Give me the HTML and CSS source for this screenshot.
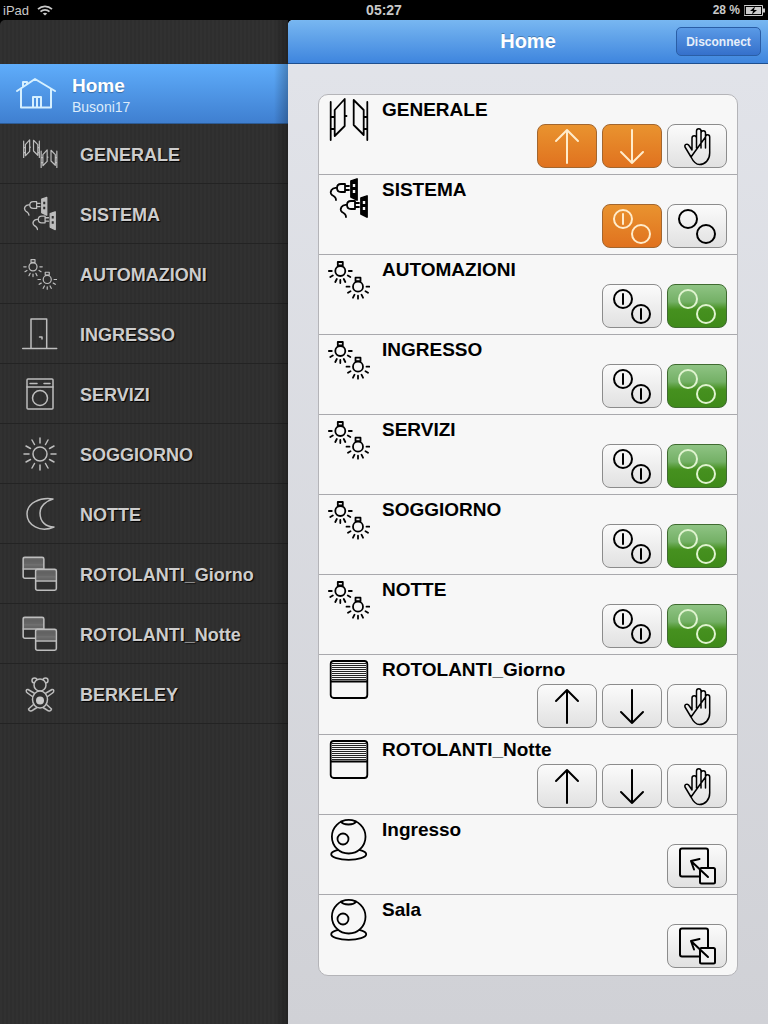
FILE: index.html
```html
<!DOCTYPE html>
<html lang="en">
<head>
    <meta charset="UTF-8">
    <meta name="viewport" content="width=device-width, initial-scale=1.0">
    <title>Home</title>
    <link rel="stylesheet" href="styles.css">
</head>
<body>
    <!-- shared icon shapes -->
    <svg class="defs" width="0" height="0">
        <defs>
            <symbol id="i-gates" viewBox="0 0 42 46">
                <path d="M2.7 7V45M6.7 15L16.7 4V31L6.7 41ZM2.7 22H6.7M2.7 34H6.7M16.7 21H18.5M25.7 5L35.7 15V40L25.7 30ZM39.3 7V45M35.7 22H39.3M35.7 34H39.3"/>
            </symbol>
            <g id="plug">
                <path class="solid" d="M23 6L29 4V25L23 22Z"/>
                <path class="holes" d="M24.800 9H27.200V12H24.800ZM24.800 15H27.200V18H24.800Z"/>
                <path d="M21 11H17M21 15H17M17 9H13C10 9 9 11 9 13C9 15 10 17 13 17H17ZM9 13C4 12 1 17 4 20C6 21 8 22 8 25"/>
            </g>
            <symbol id="i-plugs" viewBox="0 0 42 46">
                <use href="#plug"/>
                <use href="#plug" x="10" y="17"/>
            </symbol>
            <g id="bulb">
                <circle r="5"/>
                <path d="M-2.500 -9H2.500V-5.500H-2.500Z"/>
                <path d="M-11.500 0H-8.500M8.500 0H11.500M-10 6L-7.500 4.500M10 6L7.500 4.500M-5 11L-3.500 8M5 11L3.500 8M0 12V9"/>
            </g>
            <symbol id="i-lights" viewBox="0 0 42 46">
                <use href="#bulb" x="12.300" y="16"/>
                <use href="#bulb" x="30" y="31.700"/>
            </symbol>
            <symbol id="i-shutter" viewBox="0 0 42 46">
                <rect class="filled" x="2.700" y="6" width="36.600" height="37" rx="3"/>
                <path class="thin" d="M4 8.500H38M4 10.500H38M4 12.500H38M4 14.500H38M4 16.500H38M4 18.500H38M4 20.500H38M4 22.500H38M4 24.500H38"/>
                <path d="M3 26.500H39"/>
            </symbol>
            <symbol id="i-webcam" viewBox="0 0 42 46">
                <ellipse cx="20.700" cy="39.300" rx="17.500" ry="5.500"/>
                <circle class="filled" cx="20.700" cy="21.700" r="16.800"/>
                <circle cx="15" cy="24" r="5.500"/>
                <path d="M13 6.500C15 10.500 26 10.500 28 6.500"/>
            </symbol>
            <symbol id="b-up" viewBox="0 0 60 44"><path d="M30 6V39M19 17L30 6L41 17"/></symbol>
            <symbol id="b-down" viewBox="0 0 60 44"><path d="M30 6V39M19 28L30 39L41 28"/></symbol>
            <symbol id="b-hand" viewBox="0 0 60 44">
                <path d="M24 33L18 23C17 20.500 20.500 19 22 21.500L25 26V14C25 11 29.500 11 29.500 14V24M29.500 14V7C29.500 4 34 4 34 7V24M34 9C34 6 38.500 6 38.500 9V24M38.500 13C38.500 10 42.700 10 42.700 13V29C42.700 36 38 40.500 32.500 40.500C28.500 40.500 26 37 24 33Z"/>
            </symbol>
            <symbol id="b-on-off" viewBox="0 0 60 44">
                <circle cx="21" cy="15" r="9"/><path d="M21 10V20"/><circle cx="39" cy="30" r="9"/>
            </symbol>
            <symbol id="b-on-on" viewBox="0 0 60 44">
                <circle cx="21" cy="15" r="9"/><path d="M21 10V20M39 25V35"/><circle cx="39" cy="30" r="9"/>
            </symbol>
            <symbol id="b-off-off" viewBox="0 0 60 44">
                <circle cx="21" cy="15" r="9"/><circle cx="39" cy="30" r="9"/>
            </symbol>
            <symbol id="b-window" viewBox="0 0 60 44">
                <rect x="13" y="4.500" width="28" height="28" rx="2"/>
                <rect class="filled" x="33" y="24" width="15" height="15.500" rx="1.500"/>
                <path d="M41 33L24 17M24 17L32.500 15M24 17L27 25.500"/>
            </symbol>
        </defs>
    </svg>

    <div class="status-bar">
        <div class="status-left">
            <span>iPad</span>
            <svg class="wifi" viewBox="0 0 16 11"><path d="M1 4.200C5 .4 11 .4 15 4.200M3.500 6.600C6 4.300 10 4.300 12.500 6.600"/><path class="wifi-dot" d="M8 10.500L5.800 8.600C7 7.600 9 7.600 10.200 8.600Z"/></svg>
        </div>
        <div class="status-time">05:27</div>
        <div class="status-right">
            <span>28 %</span>
            <svg class="battery" viewBox="0 0 21 11"><rect x=".5" y=".5" width="18" height="10" fill="none" stroke="#ccc"/><rect x="2" y="2" width="15" height="7" fill="#ccc"/><rect x="19" y="3.500" width="2" height="4" fill="#ccc"/><path d="M11 1.500L6 6H9L8 9.500L13 5H10Z" fill="#000"/></svg>
        </div>
    </div>

    <div class="app">
        <aside class="sidebar">
            <div class="sidebar-top"></div>
            <a class="side-home">
                <svg class="side-icon home-icon" viewBox="0 0 40 40"><path d="M1 17L19 5L39 17M7 13V8H11V10M5 15V33.500H35V15M17 33.500V23H25V33.500M21 23V33.500"/></svg>
                <div class="home-text">
                    <div class="home-title">Home</div>
                    <div class="home-sub">Busoni17</div>
                </div>
            </a>
            <ul class="side-list">
                <li class="side-item">
                    <svg class="side-icon" viewBox="0 0 40 40"><use class="mini" href="#i-gates" x="2.500" y="4" width="18" height="20"/><use class="mini" href="#i-gates" x="20" y="14" width="18" height="20"/></svg>
                    <span>GENERALE</span>
                </li>
                <li class="side-item">
                    <svg class="side-icon" viewBox="0 0 40 40"><use href="#i-plugs" x="2" y="0" width="36" height="39"/></svg>
                    <span>SISTEMA</span>
                </li>
                <li class="side-item">
                    <svg class="side-icon" viewBox="0 0 40 40"><use href="#i-lights" x="3" y="0" width="34" height="37"/></svg>
                    <span>AUTOMAZIONI</span>
                </li>
                <li class="side-item">
                    <svg class="side-icon" viewBox="0 0 40 40"><path d="M11 33.500V5H26.700V33.500M2.700 34.500H36.700M19.500 23H22V25"/></svg>
                    <span>INGRESSO</span>
                </li>
                <li class="side-item">
                    <svg class="side-icon" viewBox="0 0 40 40"><rect x="7" y="5" width="26" height="30" rx="1"/><path d="M7 13H33M10 9.500H17M24 9.500H30"/><circle cx="20" cy="24" r="7.500"/></svg>
                    <span>SERVIZI</span>
                </li>
                <li class="side-item">
                    <svg class="side-icon" viewBox="0 0 40 40"><circle cx="20" cy="20" r="7"/><path d="M20 4V9M20 31V36M4 20H9M31 20H36M6 12L10.500 14.500M29.500 25.500L34 28M6 28L10.500 25.500M29.500 14.500L34 12M12 6L14.500 10.500M25.500 29.500L28 34M12 34L14.500 29.500M25.500 10.500L28 6"/></svg>
                    <span>SOGGIORNO</span>
                </li>
                <li class="side-item">
                    <svg class="side-icon" viewBox="0 0 40 40"><path d="M33 5C20 3 7 9 7 20C7 31 20 39 34 33C26 33 20 28 20 19C20 12 26 7 33 5Z"/></svg>
                    <span>NOTTE</span>
                </li>
                <li class="side-item">
                    <svg class="side-icon" viewBox="0 0 40 40"><use class="mini" href="#i-shutter" x="1.500" y="0" width="24" height="26"/><use class="mini" href="#i-shutter" x="14" y="12" width="24" height="26"/></svg>
                    <span>ROTOLANTI_Giorno</span>
                </li>
                <li class="side-item">
                    <svg class="side-icon" viewBox="0 0 40 40"><use class="mini" href="#i-shutter" x="1.500" y="0" width="24" height="26"/><use class="mini" href="#i-shutter" x="14" y="12" width="24" height="26"/></svg>
                    <span>ROTOLANTI_Notte</span>
                </li>
                <li class="side-item">
                    <svg class="side-icon" viewBox="0 0 40 40"><circle cx="14.500" cy="6.500" r="2.500"/><circle cx="25.500" cy="6.500" r="2.500"/><circle class="filled" cx="20" cy="11" r="6"/><path d="M14 19L8 15.500C6 15 5.500 18 7.500 19L13 23M26 19L32 15.500C34 15 34.500 18 32.500 19L27 23M14 30L8.500 35C9 37.500 11.500 37.500 13 36L17 33.500M26 30L31.500 35C31 37.500 28.500 37.500 27 36L23 33.500"/><ellipse class="filled" cx="20" cy="25.500" rx="7.500" ry="8.500"/><circle class="belly" cx="20" cy="26.500" r="4"/></svg>
                    <span>BERKELEY</span>
                </li>
            </ul>
        </aside>

        <main class="content">
            <header class="navbar">
                <h1>Home</h1>
                <button class="disconnect">Disconnect</button>
            </header>

            <section class="panel">
                <div class="row">
                    <svg class="row-icon"><use href="#i-gates"/></svg>
                    <div class="row-title">GENERALE</div>
                    <div class="row-buttons">
                        <button class="btn orange"><svg><use href="#b-up"/></svg></button>
                        <button class="btn orange"><svg><use href="#b-down"/></svg></button>
                        <button class="btn"><svg class="fine"><use href="#b-hand"/></svg></button>
                    </div>
                </div>
                <div class="row">
                    <svg class="row-icon"><use href="#i-plugs"/></svg>
                    <div class="row-title">SISTEMA</div>
                    <div class="row-buttons">
                        <button class="btn orange"><svg><use href="#b-on-off"/></svg></button>
                        <button class="btn"><svg><use href="#b-off-off"/></svg></button>
                    </div>
                </div>
                <div class="row">
                    <svg class="row-icon"><use href="#i-lights"/></svg>
                    <div class="row-title">AUTOMAZIONI</div>
                    <div class="row-buttons">
                        <button class="btn"><svg><use href="#b-on-on"/></svg></button>
                        <button class="btn green"><svg><use href="#b-off-off"/></svg></button>
                    </div>
                </div>
                <div class="row">
                    <svg class="row-icon"><use href="#i-lights"/></svg>
                    <div class="row-title">INGRESSO</div>
                    <div class="row-buttons">
                        <button class="btn"><svg><use href="#b-on-on"/></svg></button>
                        <button class="btn green"><svg><use href="#b-off-off"/></svg></button>
                    </div>
                </div>
                <div class="row">
                    <svg class="row-icon"><use href="#i-lights"/></svg>
                    <div class="row-title">SERVIZI</div>
                    <div class="row-buttons">
                        <button class="btn"><svg><use href="#b-on-on"/></svg></button>
                        <button class="btn green"><svg><use href="#b-off-off"/></svg></button>
                    </div>
                </div>
                <div class="row">
                    <svg class="row-icon"><use href="#i-lights"/></svg>
                    <div class="row-title">SOGGIORNO</div>
                    <div class="row-buttons">
                        <button class="btn"><svg><use href="#b-on-on"/></svg></button>
                        <button class="btn green"><svg><use href="#b-off-off"/></svg></button>
                    </div>
                </div>
                <div class="row">
                    <svg class="row-icon"><use href="#i-lights"/></svg>
                    <div class="row-title">NOTTE</div>
                    <div class="row-buttons">
                        <button class="btn"><svg><use href="#b-on-on"/></svg></button>
                        <button class="btn green"><svg><use href="#b-off-off"/></svg></button>
                    </div>
                </div>
                <div class="row">
                    <svg class="row-icon"><use href="#i-shutter"/></svg>
                    <div class="row-title">ROTOLANTI_Giorno</div>
                    <div class="row-buttons">
                        <button class="btn"><svg><use href="#b-up"/></svg></button>
                        <button class="btn"><svg><use href="#b-down"/></svg></button>
                        <button class="btn"><svg class="fine"><use href="#b-hand"/></svg></button>
                    </div>
                </div>
                <div class="row">
                    <svg class="row-icon"><use href="#i-shutter"/></svg>
                    <div class="row-title">ROTOLANTI_Notte</div>
                    <div class="row-buttons">
                        <button class="btn"><svg><use href="#b-up"/></svg></button>
                        <button class="btn"><svg><use href="#b-down"/></svg></button>
                        <button class="btn"><svg class="fine"><use href="#b-hand"/></svg></button>
                    </div>
                </div>
                <div class="row">
                    <svg class="row-icon"><use href="#i-webcam"/></svg>
                    <div class="row-title">Ingresso</div>
                    <div class="row-buttons">
                        <button class="btn"><svg><use href="#b-window"/></svg></button>
                    </div>
                </div>
                <div class="row">
                    <svg class="row-icon"><use href="#i-webcam"/></svg>
                    <div class="row-title">Sala</div>
                    <div class="row-buttons">
                        <button class="btn"><svg><use href="#b-window"/></svg></button>
                    </div>
                </div>
            </section>
        </main>
    </div>
</body>
</html>
```
FILE: styles.css
```css
html, body {
    margin: 0;
    padding: 0;
    height: 1024px;
    overflow: hidden;
    background-color: #000;
    font-family: "Liberation Sans", Arial, sans-serif;
}

.defs {
    display: block;
    height: 0;
}

/* icon drawing defaults */
svg {
    fill: none;
    stroke: currentColor;
    stroke-width: 2;
    stroke-linecap: round;
    stroke-linejoin: round;
}

.solid {
    fill: currentColor;
}

.holes {
    fill: var(--icon-bg);
    stroke: none;
}

.filled {
    fill: var(--icon-bg);
}

.thin {
    stroke-width: 1;
    stroke-linecap: butt;
    opacity: 0.85;
}

/* status bar */
.status-bar {
    height: 20px;
    display: grid;
    grid-template-columns: 1fr auto 1fr;
    align-items: center;
    padding: 0 3px;
    color: #c9c9c9;
    font-size: 13px;
}

.status-left {
    display: flex;
    align-items: center;
    gap: 8px;
}

.status-time {
    font-size: 14px;
    font-weight: bold;
}

.status-right {
    display: flex;
    justify-content: flex-end;
    align-items: center;
    gap: 4px;
    font-weight: bold;
    font-size: 12px;
}

.wifi {
    width: 16px;
    height: 11px;
    stroke-width: 1.700;
    stroke-linecap: butt;
}

.wifi-dot {
    fill: currentColor;
    stroke: none;
}

.battery {
    width: 21px;
    height: 11px;
    stroke: none;
    stroke-width: 1;
}

.app {
    display: flex;
    height: 1004px;
}

/* sidebar */
.sidebar {
    --icon-bg: #2f2f2f;
    position: relative;
    width: 288px;
    flex: none;
    border-radius: 5px 0 0 0;
    background-color: #2f2f2f;
    background-image: repeating-linear-gradient(90deg, #313131 0, #313131 2px, #2e2e2e 2px, #2e2e2e 4px);
    overflow: hidden;
}

.sidebar::after {
    content: "";
    position: absolute;
    top: 0;
    right: 0;
    bottom: 0;
    width: 14px;
    background: linear-gradient(90deg, rgba(0,0,0,0), rgba(0,0,0,0.25));
}

.sidebar-top {
    height: 44px;
}

.side-home {
    display: flex;
    align-items: center;
    gap: 16px;
    height: 60px;
    padding-left: 16px;
    background: linear-gradient(#5fadfb, #3f7fd0);
    box-sizing: border-box;
    border-bottom: 1px solid #2d5b94;
    color: #fff;
}

.home-text {
    padding-top: 3px;
}

.home-title {
    font-size: 19px;
    font-weight: bold;
    line-height: 24px;
    text-shadow: 0 1px 1px rgba(0,0,0,0.3);
}

.home-sub {
    font-size: 14px;
    line-height: 18px;
    color: #dcebfa;
}

.side-list {
    list-style-type: none;
    margin: 0;
    padding: 0;
}

.side-item {
    display: flex;
    align-items: center;
    gap: 20px;
    height: 60px;
    box-sizing: border-box;
    padding-left: 20px;
    border-bottom: 1px solid #232323;
    color: #cdcdcd;
    font-size: 18px;
    font-weight: bold;
    text-shadow: 1px 1px 1px #000;
}

.side-item span {
    padding-top: 4px;
}

.side-icon {
    width: 40px;
    height: 40px;
    flex: none;
    color: #bdbdbd;
    stroke-width: 1.500;
}

.side-icon .mini {
    stroke-width: 2.800;
}

.home-icon.side-icon {
    color: #d6f0ff;
    stroke-width: 2;
}

.belly {
    fill: #c8c8c8;
    stroke: none;
}

/* main column */
.content {
    flex: 1;
    display: flex;
    flex-direction: column;
    background: linear-gradient(#e2e4ea, #d0d1d6);
    border-radius: 5px 0 0 0;
    overflow: hidden;
}

.navbar {
    position: relative;
    height: 44px;
    flex: none;
    box-sizing: border-box;
    display: flex;
    align-items: center;
    justify-content: center;
    background: linear-gradient(#78b7f1, #3e85de);
    border-bottom: 1px solid #1e4f8e;
}

.navbar h1 {
    margin: 0;
    font-size: 20px;
    color: #fff;
    text-shadow: 0 -1px 0 rgba(0,0,0,0.25);
}

.disconnect {
    position: absolute;
    right: 7px;
    top: 7px;
    width: 85px;
    height: 29px;
    padding: 0;
    border: 1px solid #2a5ea6;
    border-radius: 5px;
    background: linear-gradient(#5a9ae6, #3570cb);
    color: #e6effb;
    font-family: inherit;
    font-size: 12px;
    font-weight: bold;
}

.panel {
    --icon-bg: #f7f7f7;
    margin: 30px 30px 0;
    background-color: #f7f7f7;
    border: 1px solid #b4b4b8;
    border-radius: 10px;
    overflow: hidden;
}

.row {
    display: grid;
    grid-template-columns: 42px 1fr;
    grid-template-rows: 28px 44px;
    column-gap: 12px;
    height: 80px;
    box-sizing: border-box;
    padding: 0 10px 0 9px;
    border-bottom: 1px solid #a9a9ad;
    color: #000;
}

.row:last-child {
    border-bottom: none;
}

.row-icon {
    grid-column: 1;
    grid-row: 1 / 3;
    width: 42px;
    height: 46px;
    stroke-width: 1.800;
}

.row-title {
    grid-column: 2;
    grid-row: 1;
    align-self: end;
    font-size: 19px;
    font-weight: bold;
    line-height: 24px;
    margin-bottom: 1px;
}

.row-buttons {
    grid-column: 1 / 3;
    grid-row: 2;
    display: flex;
    justify-content: flex-end;
    gap: 5px;
    margin-top: 1px;
}

.btn {
    --icon-bg: #f2f2f2;
    width: 60px;
    height: 44px;
    padding: 0;
    box-sizing: border-box;
    border: 1px solid #8c8c8c;
    border-radius: 8px;
    background: linear-gradient(#fbfbfb, #e1e1e1);
    color: #000;
}

.btn svg {
    display: block;
    width: 60px;
    height: 44px;
    margin: -1px;
}

.btn svg.fine {
    stroke-width: 1.500;
}

.orange {
    border-color: #a3662e;
    background: linear-gradient(#e9932f, #e0721f);
    color: #ffeccb;
}

.green {
    border-color: #3f6b30;
    background: linear-gradient(#8fc484 0, #74b066 40%, #46911f 58%, #3f8a1a 100%);
    color: #dff3cf;
}
```
